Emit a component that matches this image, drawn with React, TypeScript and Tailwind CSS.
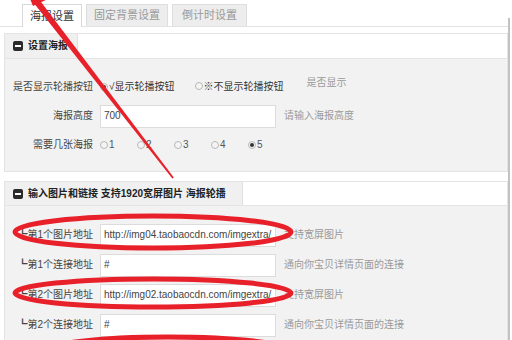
import React from "react";

function Radio({ checked = false }: { checked?: boolean }) {
  return (
    <span className="inline-flex h-[8px] w-[8px] items-center justify-center rounded-full border border-[#b8b8b8] bg-[#f4f4f4]">
      {checked && <span className="h-[4px] w-[4px] rounded-full bg-[#333]" />}
    </span>
  );
}

function MinusIcon() {
  return (
    <span className="inline-flex h-[10px] w-[10px] items-center justify-center rounded-[2px] bg-[#2b2b2b]">
      <span className="h-[2px] w-[6px] bg-white" />
    </span>
  );
}

function Row({ label, children }: { label: string; children: React.ReactNode }) {
  return (
    <div className="flex h-[24px] items-center">
      <div className="w-[88px] shrink-0 text-right text-[#444]">{label}</div>
      <div className="ml-[7px] flex items-center">{children}</div>
    </div>
  );
}

function Input({ value }: { value: string }) {
  return (
    <div className="flex h-[23px] w-[176px] items-center overflow-hidden whitespace-nowrap border border-[#dcdcdc] bg-white pl-[3px] text-[#444]">
      {value}
    </div>
  );
}

export default function App() {
  return (
    <div className="relative h-[340px] w-[512px] overflow-hidden bg-white font-['Liberation_Sans','Noto_Sans_CJK_SC',sans-serif] text-[10px] leading-none">
      <div className="flex h-full">
        <div className="flex-1">
          {/* tabs */}
          <div className="flex h-[27px] items-end gap-[4px] border-b border-[#e2e2e2] pl-[22px] text-[11px]">
            <div className="-mb-px flex h-[23px] w-[60px] items-center justify-center border border-b-0 border-[#d8d8d8] bg-white text-[#333]">
              海报设置
            </div>
            <div className="flex h-[22px] w-[82px] items-center justify-center border border-b-0 border-[#dedede] bg-[#ededed] text-[#999]">
              固定背景设置
            </div>
            <div className="flex h-[22px] w-[75px] items-center justify-center border border-b-0 border-[#dedede] bg-[#ededed] text-[#999]">
              倒计时设置
            </div>
          </div>

          {/* section 1 */}
          <div className="ml-[4px] mt-[6px] border border-[#e4e4e4]">
            <div className="flex h-[25px] border-b border-[#e4e4e4] bg-white">
              <div className="flex w-[73px] items-center gap-[5px] border-r border-[#e0e0e0] bg-[#f0f0f0] pl-[8px] font-bold text-[#222]">
                <MinusIcon />
                设置海报
              </div>
            </div>
            <div className="flex flex-col gap-[5px] bg-[#f2f2f2] pb-[14px] pt-[16px]">
              <Row label="是否显示轮播按钮">
                <div className="flex items-center">
                  <Radio checked />
                  <span className="ml-[1px] text-[#333]">√显示轮播按钮</span>
                  <span className="ml-[20px]">
                    <Radio />
                  </span>
                  <span className="ml-[1px] text-[#333]">※不显示轮播按钮</span>
                  <span className="ml-[23px] -mt-[8px] text-[#9a9a9a]">是否显示</span>
                </div>
              </Row>
              <Row label="海报高度">
                <Input value="700" />
                <span className="ml-[8px] text-[#9a9a9a]">请输入海报高度</span>
              </Row>
              <Row label="需要几张海报">
                {["1", "2", "3", "4", "5"].map((n) => (
                  <span key={n} className="flex w-[37px] items-center gap-[1px] text-[#555]">
                    <Radio checked={n === "5"} />
                    {n}
                  </span>
                ))}
              </Row>
            </div>
          </div>

          {/* section 2 */}
          <div className="ml-[4px] mt-[9px] border border-[#e4e4e4]">
            <div className="flex h-[24px] border-b border-[#e4e4e4] bg-white">
              <div className="flex w-[238px] items-center gap-[5px] border-r border-[#e0e0e0] bg-[#f0f0f0] pl-[8px] font-bold text-[#222]">
                <MinusIcon />
                输入图片和链接 支持1920宽屏图片 海报轮播
              </div>
            </div>
            <div className="flex flex-col gap-[6px] bg-[#f2f2f2] pb-[14px] pt-[17px]">
              <Row label="┗第1个图片地址">
                <Input value="http://img04.taobaocdn.com/imgextra/" />
                <span className="ml-[8px] text-[#9a9a9a]">支持宽屏图片</span>
              </Row>
              <Row label="┗第1个连接地址">
                <Input value="#" />
                <span className="ml-[8px] text-[#9a9a9a]">通向你宝贝详情页面的连接</span>
              </Row>
              <Row label="┗第2个图片地址">
                <Input value="http://img02.taobaocdn.com/imgextra/" />
                <span className="ml-[8px] text-[#9a9a9a]">支持宽屏图片</span>
              </Row>
              <Row label="┗第2个连接地址">
                <Input value="#" />
                <span className="ml-[8px] text-[#9a9a9a]">通向你宝贝详情页面的连接</span>
              </Row>
            </div>
          </div>
        </div>
        {/* frame edge */}
        <div className="w-[4px] shrink-0 pt-[18px]">
          <div className="h-full w-[2px] bg-[#c2c2c2]" />
        </div>
      </div>

      {/* red annotations */}
      <svg
        className="pointer-events-none absolute left-0 top-0"
        width="512"
        height="340"
        viewBox="0 0 512 340"
      >
        <polygon points="33,6 50,-2 20,-25" fill="#e8202a" />
        <polygon points="38,-2 33,2 172.3,178.6 173.8,177.4" fill="#e8202a" />
        <ellipse cx="153" cy="232" rx="138" ry="16" fill="none" stroke="#e8202a" strokeWidth="5" />
        <ellipse cx="153" cy="293" rx="138" ry="14" fill="none" stroke="#e8202a" strokeWidth="5" />
        <ellipse cx="168" cy="352" rx="125" ry="15" fill="none" stroke="#e8202a" strokeWidth="5" />
      </svg>
    </div>
  );
}
